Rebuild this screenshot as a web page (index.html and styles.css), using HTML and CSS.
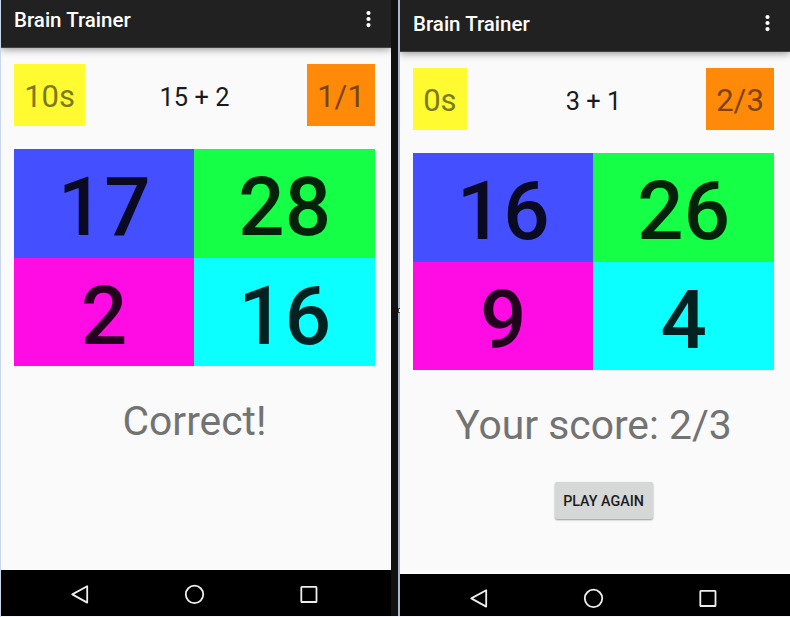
FILE: index.html
```html
<!DOCTYPE html>
<html lang="en">
<head>
<meta charset="utf-8">
<title>Brain Trainer</title>
<link rel="stylesheet" href="styles.css">
</head>
<body>
<main class="stage">
  <section class="phone first">
    <header class="appbar">
      <h1>Brain Trainer</h1>
      <svg class="more" viewBox="0 0 6 18" width="6" height="18"><circle cx="3.5" cy="3" r="2.1"/><circle cx="3.5" cy="9" r="2.1"/><circle cx="3.5" cy="15.1" r="2.1"/></svg>
    </header>
    <div class="content">
      <div class="status">
        <div class="timer">10s</div>
        <div class="question">15 + 2</div>
        <div class="points">1/1</div>
      </div>
      <div class="answers">
        <div class="cell blue">17</div>
        <div class="cell green">28</div>
        <div class="cell pink">2</div>
        <div class="cell cyan">16</div>
      </div>
      <p class="result">Correct!</p>
    </div>
    <nav class="navbar">
      <svg viewBox="0 0 24 24" width="24" height="24"><path d="M19.2 4.2v16.4L4.3 12.4z"/></svg>
      <svg viewBox="0 0 24 24" width="24" height="24"><circle cx="11.5" cy="12.4" r="8.7"/></svg>
      <svg viewBox="0 0 24 24" width="24" height="24"><rect x="4.3" y="4.8" width="15.2" height="15.2" rx=".6"/></svg>
    </nav>
  </section>
  <div class="divider"><i class="handle"></i></div>
  <section class="phone second">
    <header class="appbar">
      <h1>Brain Trainer</h1>
      <svg class="more" viewBox="0 0 6 18" width="6" height="18"><circle cx="3.5" cy="3" r="2.1"/><circle cx="3.5" cy="9" r="2.1"/><circle cx="3.5" cy="15.1" r="2.1"/></svg>
    </header>
    <div class="content">
      <div class="status">
        <div class="timer">0s</div>
        <div class="question">3 + 1</div>
        <div class="points">2/3</div>
      </div>
      <div class="answers">
        <div class="cell blue">16</div>
        <div class="cell green">26</div>
        <div class="cell pink">9</div>
        <div class="cell cyan">4</div>
      </div>
      <p class="result">Your score: 2/3</p>
      <button class="again">PLAY AGAIN</button>
    </div>
    <nav class="navbar">
      <svg viewBox="0 0 24 24" width="24" height="24"><path d="M19.2 4.2v16.4L4.3 12.4z"/></svg>
      <svg viewBox="0 0 24 24" width="24" height="24"><circle cx="11.5" cy="12.4" r="8.7"/></svg>
      <svg viewBox="0 0 24 24" width="24" height="24"><rect x="4.3" y="4.8" width="15.2" height="15.2" rx=".6"/></svg>
    </nav>
  </section>
</main>
</body>
</html>
```
FILE: styles.css
```css
* { box-sizing: border-box; }
body {
  margin: 0;
  background: #f4f6fc;
  font-family: Roboto, "Liberation Sans", sans-serif;
}
.stage {
  display: grid;
  grid-template-columns: 390px 9px 390px;
  height: 617px;
  padding-bottom: 1px;
  border-left: 1px solid #c9d6ec;
  overflow: hidden;
}
.phone {
  display: flex;
  flex-direction: column;
  background: #fafafa;
  overflow: hidden;
}
.appbar {
  flex: none;
  display: flex;
  justify-content: space-between;
  height: 48px;
  padding: 8px 20px 0 13px;
  background: #212121;
  border-bottom: 1px solid #454145;
  box-shadow: 0 1px 8px rgba(0, 0, 0, .45);
}
.second .appbar { height: 52px; padding-top: 12px; }
h1 {
  margin: 0;
  color: #fff;
  font-size: 20.5px;
  line-height: 24px;
  font-weight: 500;
}
.more { margin-top: 2px; fill: #fff; }
.content {
  flex: 1;
  display: flex;
  flex-direction: column;
  align-items: center;
  padding: 16px 16px 0 13px;
}
.status {
  width: 361px;
  height: 62px;
  display: grid;
  grid-template-columns: 1fr auto 1fr;
}
.timer, .points {
  justify-self: start;
  padding: 2px 10.2px 0;
  height: 62px;
  line-height: 62px;
  font-size: 31px;
  background: #fffb30;
  color: #7c7a1c;
}
.points { justify-self: end; background: #ff8a0a; color: #7c440a; }
.question {
  padding-top: 2px;
  color: #1a1a1a;
  font-size: 25.4px;
  line-height: 62px;
}
.answers {
  width: 361px;
  margin-top: 23px;
  display: grid;
  grid-template-columns: 180.4px 180.6px;
  grid-auto-rows: 108.7px;
}
.cell {
  padding-top: 4px;
  text-align: center;
  font-size: 81.6px;
  line-height: 109px;
  font-weight: 500;
}
.blue { background: #444fff; color: #0a0a22; }
.green { background: #14ff45; color: #04220a; }
.pink { background: #ff0ce4; color: #22021e; }
.cyan { background: #0cffff; color: #022222; }
.result {
  margin: 31px 0 0;
  color: #737373;
  font-size: 40.8px;
  line-height: 48px;
}
.again {
  width: 98px;
  height: 37px;
  margin: 33px 0 0 20px;
  padding: 2px 0 0;
  border: 0;
  border-radius: 2px;
  background: #d6d7d7;
  color: #1c1c1c;
  box-shadow: 0 1px 2px rgba(0, 0, 0, .4);
  font: 500 14.3px/35px Roboto, "Liberation Sans", sans-serif;
}
.navbar {
  flex: none;
  display: flex;
  justify-content: center;
  gap: 90.5px;
  height: 46px;
  padding: 12px 3px 0 0;
  background: #000;
}
.second .navbar { height: 42px; }
.navbar svg { fill: none; stroke: #eee; stroke-width: 1.8; stroke-linejoin: round; }
.divider {
  position: relative;
  background: #111;
  border-right: 2px solid #a9b6ce;
}
.handle {
  position: absolute;
  right: -2px;
  top: 308px;
  width: 2px;
  height: 5px;
  background: #fff;
  border: 1px solid #444;
  border-right: 0;
}
```
